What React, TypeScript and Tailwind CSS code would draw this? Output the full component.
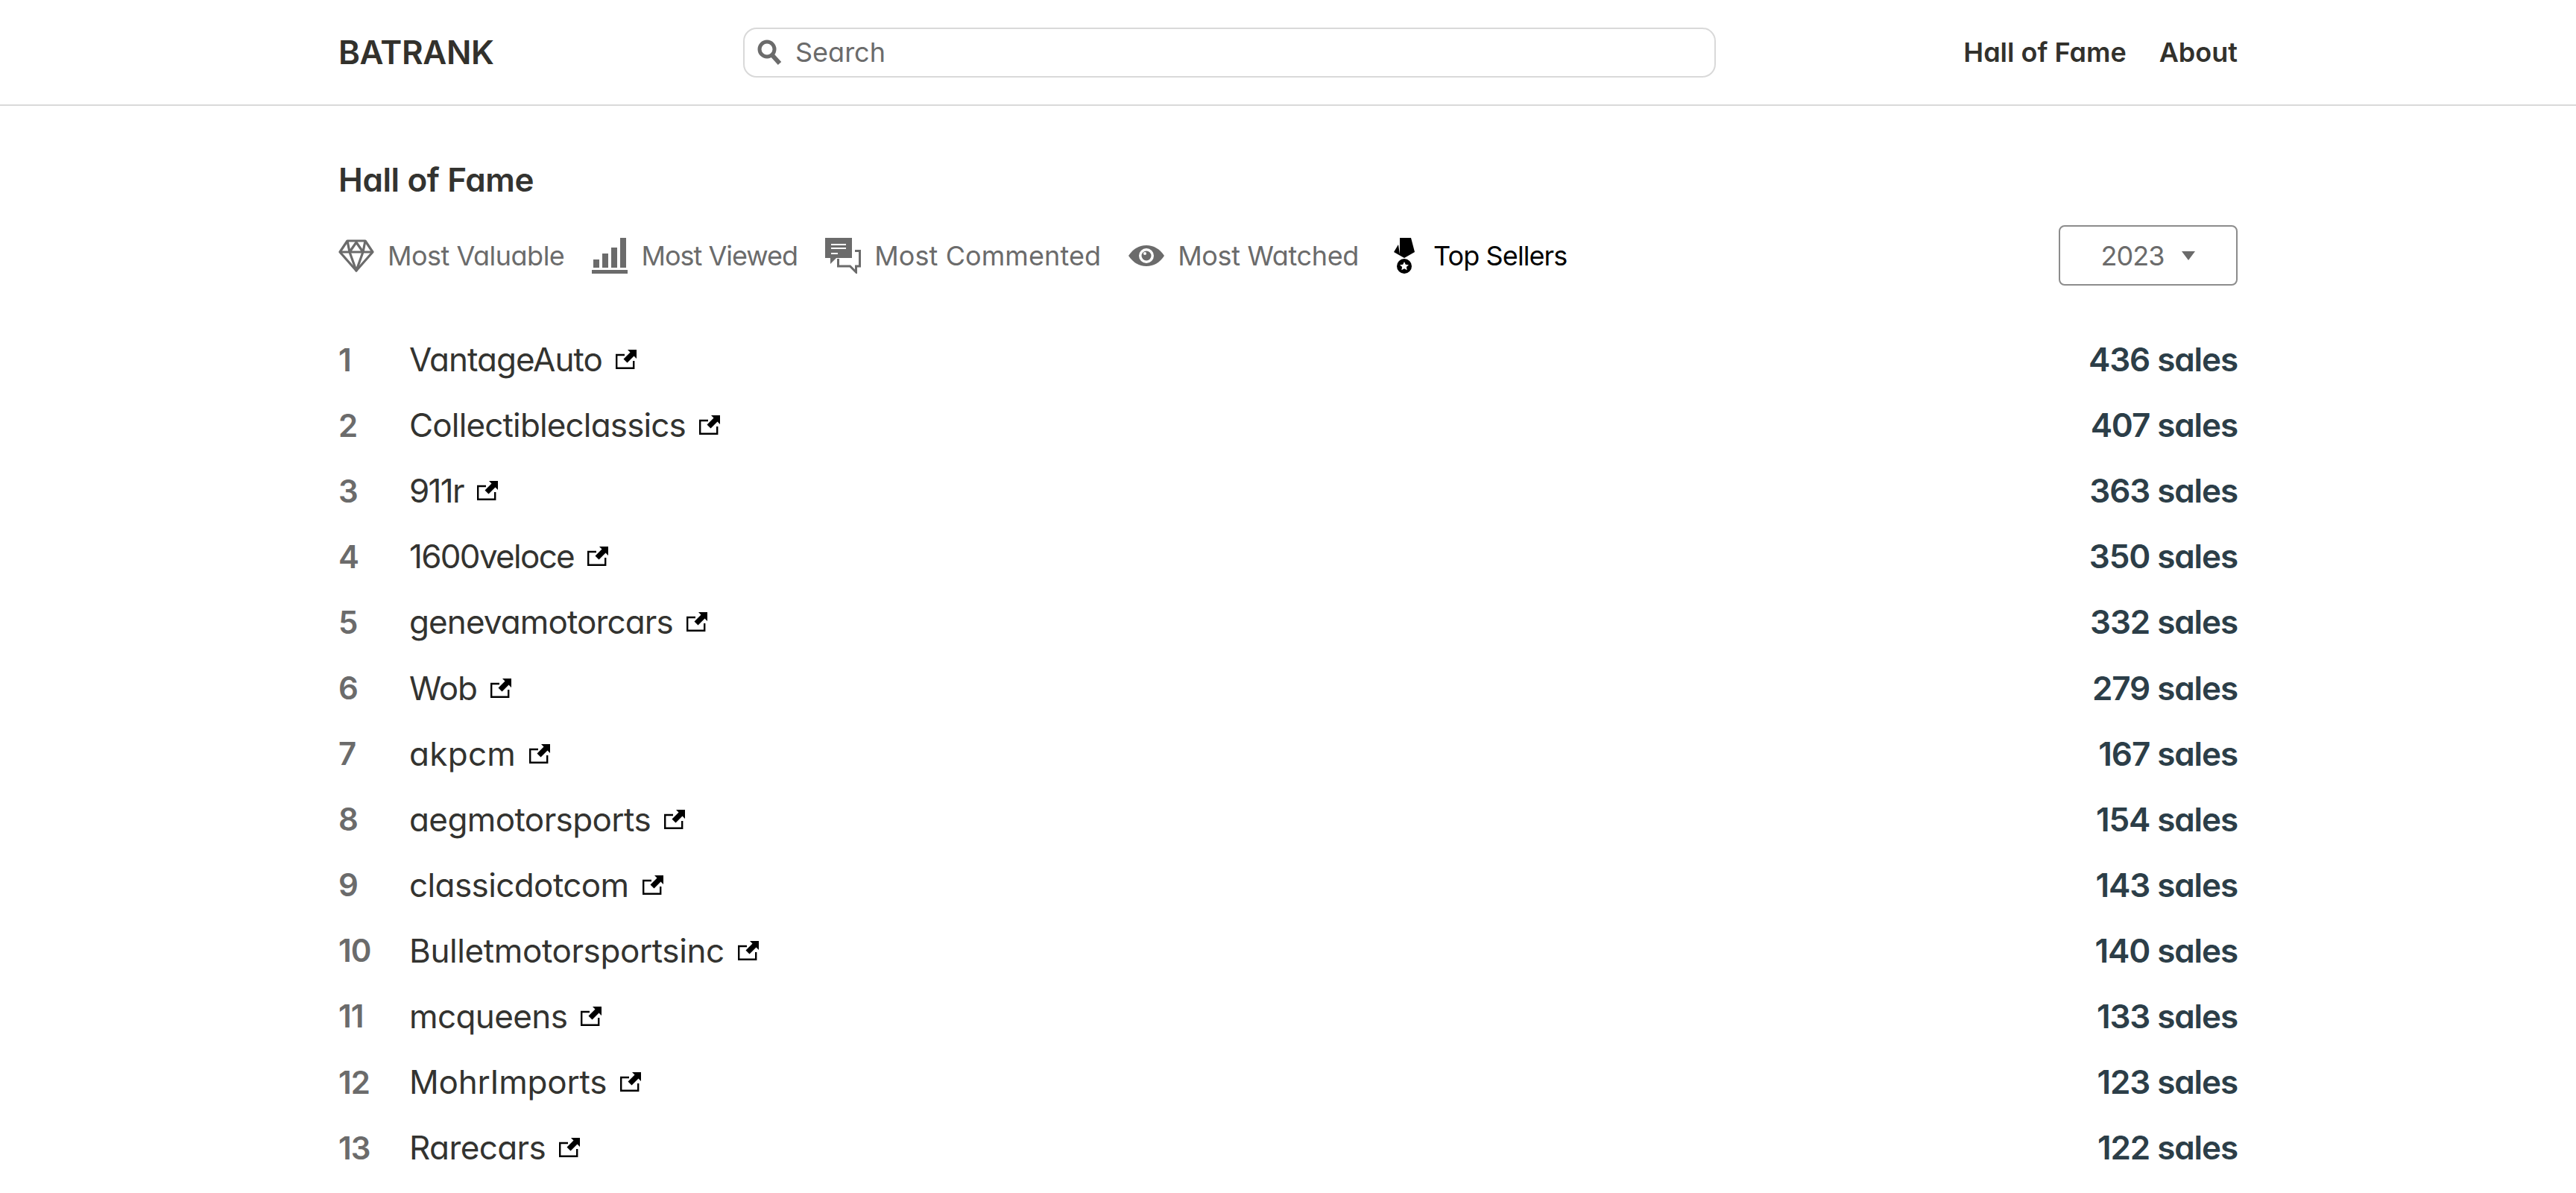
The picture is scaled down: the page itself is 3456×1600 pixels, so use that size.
import React from 'react';

const rows = [
  { name: 'VantageAuto', sales: 436, track: 'tracking-[-1px]' },
  { name: 'Collectibleclassics', sales: 407, track: 'tracking-[-0.85px]' },
  { name: '911r', sales: 363, track: 'tracking-[-1.7px]' },
  { name: '1600veloce', sales: 350, track: 'tracking-[-1.7px]' },
  { name: 'genevamotorcars', sales: 332, track: 'tracking-[-0.9px]' },
  { name: 'Wob', sales: 279, track: 'tracking-[-1.3px]' },
  { name: 'akpcm', sales: 167, track: 'tracking-[0.3px]' },
  { name: 'aegmotorsports', sales: 154, track: 'tracking-[-0.6px]' },
  { name: 'classicdotcom', sales: 143, track: 'tracking-[-0.6px]' },
  { name: 'Bulletmotorsportsinc', sales: 140, track: 'tracking-[-0.4px]' },
  { name: 'mcqueens', sales: 133, track: 'tracking-[-0.6px]' },
  { name: 'MohrImports', sales: 123, track: 'tracking-[-0.2px]' },
  { name: 'Rarecars', sales: 122, track: 'tracking-[-0.6px]' },
];

function Diamond() {
  return (
    <svg viewBox="0 0 48 44" className="w-12 h-11" fill="none" stroke="#6b6b6b" strokeWidth="3.2" strokeLinejoin="round">
      <path d="M12 2h24l10 15L24 42 2 17z" />
      <path d="M2 17h44M15 17l9 25 9-25M12 2l3 15 9-13 9 13 3-15" />
    </svg>
  );
}

function Bars() {
  return (
    <svg viewBox="0 0 48 48" className="w-12 h-12" fill="#6b6b6b">
      <rect x="2" y="29" width="8" height="11" />
      <rect x="14" y="21" width="8" height="19" />
      <rect x="26" y="13" width="8" height="27" />
      <rect x="38" y="0" width="8" height="40" />
      <rect x="0" y="43" width="48" height="5" />
    </svg>
  );
}

function Comments() {
  return (
    <svg viewBox="0 0 48 48" className="w-12 h-12">
      <path d="M0 0h36v27H15l-8 8v-8H0z" fill="#6b6b6b" />
      <path d="M8 9h20M8 14h20M8 21h9" stroke="#fff" strokeWidth="2.2" />
      <path d="M40 17.5h6.5V38h-5v8l-8-8H17.5V28" fill="none" stroke="#6b6b6b" strokeWidth="3" />
    </svg>
  );
}

function Eye() {
  return (
    <svg viewBox="0 0 48 28" className="w-12 h-7">
      <path fillRule="evenodd" fill="#6b6b6b" d="M0 14C6 5 14 0 24 0s18 5 24 14c-6 9-14 14-24 14S6 23 0 14zm24 10a10 10 0 1 0 0-20 10 10 0 0 0 0 20z" />
      <circle cx="24" cy="14" r="6.5" fill="#6b6b6b" />
      <circle cx="22" cy="11" r="2" fill="#fff" />
    </svg>
  );
}

function Medal() {
  return (
    <svg viewBox="0 0 28 48" className="w-7 h-12" fill="#000">
      <path d="M8 0h15l5 19-14 8L0 19 6 9l2 13z" />
      <circle cx="14" cy="38" r="10" />
      <path fill="#fff" d="M14 32l1.8 3.8 4.2.5-3.1 2.8.8 4.1-3.7-2-3.7 2 .8-4.1L8 36.3l4.2-.5z" />
    </svg>
  );
}

function ExternalIcon() {
  return (
    <svg viewBox="0 0 28 26" className="w-7 h-[26px] ml-[18px] shrink-0">
      <path d="M12 7H1.2v17.8h23V15" fill="none" stroke="#000" strokeWidth="2.4" />
      <path d="M16 0h12v12l-3.5-3.5-9 9-5-5 9-9z" fill="#000" />
    </svg>
  );
}

const tabs = [
  { label: 'Most Valuable', icon: <Diamond />, track: 'tracking-[-0.5px]' },
  { label: 'Most Viewed', icon: <Bars />, track: 'tracking-[-1px]' },
  { label: 'Most Commented', icon: <Comments />, track: 'tracking-[0.1px]' },
  { label: 'Most Watched', icon: <Eye />, track: 'tracking-[-0.35px]' },
];

export default function App() {
  return (
    <div className="w-full h-[1600px] overflow-hidden bg-white font-['Inter',sans-serif] text-[#333330] [font-feature-settings:'cv11']">
      <header className="h-[142px] border-b-2 border-[#d9d9d9] flex justify-center">
        <div className="w-[2548px] flex items-center">
          <div className="w-[543px] text-[44px] font-semibold tracking-[-0.4px] text-[#32312c]">BATRANK</div>
          <div className="w-[1305px] h-[67px] border-2 border-[#d9d9d9] rounded-[18px] flex items-center pl-4 gap-[18px]">
            <svg viewBox="0 0 34 34" className="w-[34px] h-[34px]" fill="none" stroke="#6b6b6b">
              <circle cx="14" cy="13" r="10" strokeWidth="5" />
              <path d="M21 21l10 11" strokeWidth="6" />
            </svg>
            <span className="text-[36px] text-[#6b6b6b]">Search</span>
          </div>
          <nav className="ml-auto flex items-center gap-11 text-[36px] font-semibold text-[#32312c]">
            <span>Hall of Fame</span>
            <span>About</span>
          </nav>
        </div>
      </header>

      <main className="w-[2548px] mx-auto">
        <h1 className="mt-[72px] text-[44px] font-semibold tracking-[-0.4px] text-[#333330] leading-[54px]">Hall of Fame</h1>

        <div className="mt-[34px] flex items-center h-[81px]">
          {tabs.map(t => (
            <div key={t.label} className="flex items-center gap-[18px] mr-[37px] text-[36px] text-[#6b6b6b]">
              <span className="w-12 h-12 flex items-center justify-center">{t.icon}</span>
              <span className={t.track}>{t.label}</span>
            </div>
          ))}
          <div className="flex items-center gap-[15px] text-[36px] text-black">
            <span className="w-12 h-12 flex items-center justify-center">
              <Medal />
            </span>
            <span className="tracking-[-0.9px]">Top Sellers</span>
          </div>
          <div className="ml-auto w-[240px] h-[81px] border-2 border-[#8c8c8c] rounded-lg flex items-center justify-center gap-6 text-[36px] text-[#6b6b6b]">
            <span className="tracking-[-1px]">2023</span>
            <span className="w-0 h-0 border-x-[9px] border-x-transparent border-t-[12px] border-t-[#6b6b6b]"></span>
          </div>
        </div>

        <div className="mt-[55px] flex flex-col">
          {rows.map((r, i) => (
            <div key={r.name} className="h-[88.1px] flex items-center shrink-0">
              <span className="w-[95px] text-[42px] font-semibold tracking-[-1px] text-[#6b6b6b]">{i + 1}</span>
              <span className={`text-[44px] text-[#333330] ${r.track}`}>{r.name}</span>
              <ExternalIcon />
              <span className="ml-auto text-[44px] font-semibold tracking-[-1.1px] text-[#2c3e48]">{r.sales} sales</span>
            </div>
          ))}
        </div>
      </main>
    </div>
  );
}
